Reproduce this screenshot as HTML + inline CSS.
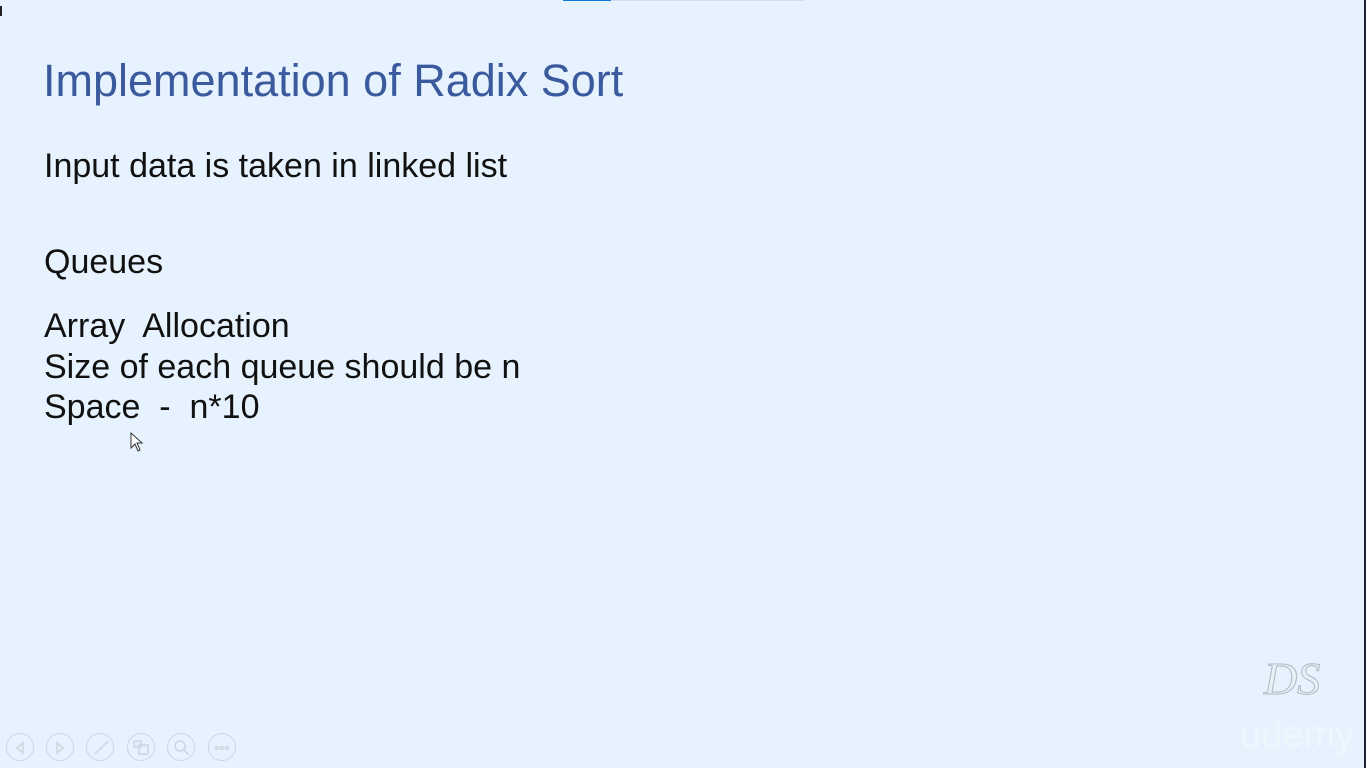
<!DOCTYPE html>
<html><head><meta charset="utf-8"><style>
body{margin:0;width:1366px;height:768px;background:#e6f2fd;position:relative;overflow:hidden;font-family:"Liberation Sans",Arial,sans-serif}
.t{position:absolute;left:44px;white-space:nowrap;color:#111;font-size:34px}
#title{position:absolute;left:43px;top:55px;font-size:45px;color:#3b5a9d;white-space:nowrap}
.ic{position:absolute;top:733px;width:28px;height:28px;border:1.5px solid #cdd6e0;border-radius:50%;box-sizing:border-box}
</style></head><body>
<div style="position:absolute;left:563px;top:0;width:48px;height:1px;background:#0a7ae0"></div>
<div style="position:absolute;left:611px;top:0;width:193px;height:1px;background:#d6dde6"></div>
<div style="position:absolute;left:0;top:6px;width:2px;height:10px;background:#222"></div>
<div style="position:absolute;right:0;top:0;width:2px;height:768px;background:#1a2230"></div>
<div id="title">Implementation of Radix Sort</div>
<div class="t" style="top:147px">Input data is taken in linked list</div>
<div class="t" style="top:243px">Queues</div>
<div class="t" style="top:307px">Array&nbsp; Allocation</div>
<div class="t" style="top:348px">Size of each queue should be n</div>
<div class="t" style="top:388px">Space&nbsp; -&nbsp; n*10</div>
<svg style="position:absolute;left:130px;top:432px" width="16" height="22" viewBox="0 0 16 22"><path d="M1 1 L1 16 L5 12 L8 19 L10 18 L7 11 L12 11 Z" fill="#fff" stroke="#333" stroke-width="1"/></svg>
<div class="ic" style="left:6px"></div>
<div class="ic" style="left:46px"></div>
<div class="ic" style="left:86px"></div>
<div class="ic" style="left:127px"></div>
<div class="ic" style="left:167px"></div>
<div class="ic" style="left:208px"></div>
<svg style="position:absolute;left:0;top:733px" width="240" height="30">
<g fill="none" stroke="#cdd6e0" stroke-width="1.5">
<path d="M23 10 L17 15 L23 20 Z"/><path d="M57 10 L63 15 L57 20 Z"/>
<path d="M95 21 L108 8"/><rect x="134" y="8" width="7" height="6"/><rect x="139" y="12" width="9" height="9"/>
<circle cx="180" cy="13" r="5"/><path d="M184 17 L189 22"/>
<circle cx="217" cy="15" r="1.5"/><circle cx="222" cy="15" r="1.5"/><circle cx="227" cy="15" r="1.5"/>
</g></svg>
<div style="position:absolute;left:1264px;top:652px;font-family:'Liberation Serif',serif;font-style:italic;font-size:46px;color:#e8f0f8;-webkit-text-stroke:1px #b0b8c2">DS</div>
<div style="position:absolute;left:1240px;top:714px;font-size:38px;color:#eef6fe">udemy</div>
</body></html>
